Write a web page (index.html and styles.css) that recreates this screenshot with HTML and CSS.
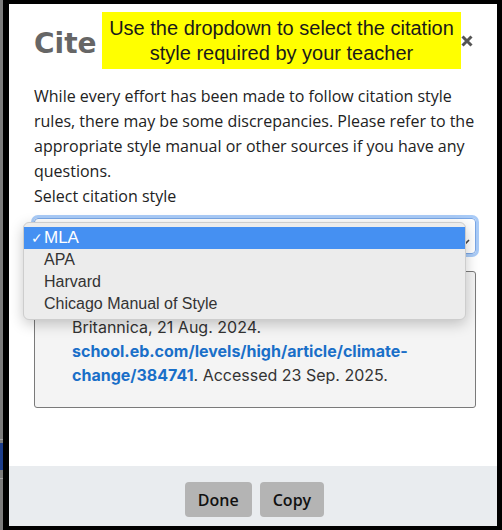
FILE: index.html
```html
<!DOCTYPE html>
<html lang="en">
<head>
<meta charset="utf-8">
<title>Cite</title>
<link rel="stylesheet" href="styles.css">
</head>
<body>
<div class="page">
  <div class="backdrop">
    <div class="backdrop-line"></div>
    <div class="backdrop-blue"></div>
    <div class="backdrop-line"></div>
  </div>
  <div class="frame">
    <div class="modal">
      <div class="modal-body">
        <div class="modal-header">
          <h2 class="title">Cite</h2>
          <svg class="close" width="12" height="12" viewBox="0 0 12 12" aria-label="Close">
            <path d="M1.5 1.5 L10.5 10.5 M10.5 1.5 L1.5 10.5" stroke="#555" stroke-width="3" stroke-linecap="butt"/>
          </svg>
        </div>
        <p class="intro">While every effort has been made to follow citation style rules, there may be some discrepancies. Please refer to the appropriate style manual or other sources if you have any questions.</p>
        <div class="label">Select citation style</div>
        <div class="select">
          <span class="select-value">MLA</span>
          <svg class="chevron" width="9" height="6" viewBox="0 0 9 6"><path d="M1 1 L4.5 4.5 L8 1" fill="none" stroke="#444" stroke-width="1.6"/></svg>
        </div>
        <div class="citation">
          <p class="citation-text">“Climate change.” <i>Britannica School</i>, Encyclopædia Britannica, 21 Aug. 2024. <a class="link" href="#">school.eb.com/levels/high/article/climate-change/384741</a>. Accessed 23 Sep. 2025.</p>
        </div>
      </div>
      <div class="modal-footer">
        <button class="btn">Done</button>
        <button class="btn">Copy</button>
      </div>
      <div class="tip">Use the dropdown to select the citation style required by your teacher</div>
      <ul class="menu">
        <li class="menu-item selected"><span class="check">✓</span>MLA</li>
        <li class="menu-item">APA</li>
        <li class="menu-item">Harvard</li>
        <li class="menu-item">Chicago Manual of Style</li>
      </ul>
    </div>
  </div>
</div>
</body>
</html>
```
FILE: styles.css
```css
* { box-sizing: border-box; }
html, body {
  margin: 0;
  padding: 0;
  background: #000;
}
.page {
  display: flex;
  width: 502px;
  height: 530px;
  overflow: hidden;
}
.backdrop {
  width: 3px;
  background: #7d7d7d;
  display: flex;
  flex-direction: column;
  padding-top: 439px;
}
.backdrop-line {
  height: 1px;
  background: #a5a5a5;
}
.backdrop-blue {
  height: 27px;
  margin: 3px 0 8px;
  background: #1d3e8c;
}
.frame {
  flex: 1;
  padding: 4px 5px 4px 6px;
}
.modal {
  position: relative;
  height: 100%;
  background: #fff;
  display: flex;
  flex-direction: column;
}
.modal-body {
  flex: 1;
  padding: 23px 21px 0 25px;
}
.modal-header {
  display: flex;
  justify-content: space-between;
  align-items: center;
}
.title {
  margin: 0;
  font-family: "DejaVu Sans", sans-serif;
  font-weight: bold;
  font-size: 28px;
  line-height: 33px;
  color: #666;
}
.close {
  margin-right: 3px;
  margin-top: -6px;
}
.intro {
  margin: 24px 0 0;
  font-family: "Open Sans", sans-serif;
  font-size: 16px;
  line-height: 25px;
  color: #222;
}
.label {
  font-family: "Open Sans", sans-serif;
  font-size: 16px;
  line-height: 25px;
  color: #222;
}
.select {
  margin-top: 9px;
  height: 36px;
  border: 1px solid #7aa7e6;
  border-radius: 4px;
  box-shadow: 0 0 0 3px #a9cbf7;
  display: flex;
  align-items: center;
  justify-content: space-between;
  padding: 0 5px 0 12px;
  font-family: "Liberation Sans", sans-serif;
  font-size: 16px;
  color: #222;
}
.chevron { margin-top: 12px; }
.citation {
  margin-top: 17px;
  height: 137px;
  border: 1px solid #7a7a7a;
  border-radius: 3px;
  background: #f4f4f4;
  padding: 19px 20px 0 37px;
}
.citation-text {
  margin: 0;
  text-indent: -22px;
  font-family: Inter, sans-serif;
  font-size: 16px;
  line-height: 24px;
  color: #333;
}
.link {
  color: #1a6fc8;
  font-weight: bold;
  text-decoration: none;
}
.modal-footer {
  height: 60px;
  background: #e9ecef;
  display: flex;
  justify-content: center;
  align-items: flex-start;
  gap: 8px;
  padding: 16px 0 0 3px;
}
.btn {
  height: 35px;
  padding: 0 13px;
  border: none;
  border-radius: 4px;
  background: #b4b4b4;
  font-family: "Open Sans", sans-serif;
  font-weight: 600;
  font-size: 16px;
  color: #111;
}
.tip {
  position: absolute;
  left: 93px;
  top: 8px;
  width: 359px;
  height: 57px;
  padding-top: 4px;
  background: #ffff00;
  font-family: "Liberation Sans", sans-serif;
  font-size: 20px;
  line-height: 25px;
  text-align: center;
  color: #1a1a1a;
}
.menu {
  position: absolute;
  left: 14px;
  top: 218px;
  width: 443px;
  margin: 0;
  padding: 4px 0;
  list-style: none;
  background: #ececec;
  border: 1px solid #cdcdcd;
  border-radius: 6px;
  box-shadow: 0 4px 14px rgba(0,0,0,0.22);
  font-family: "Liberation Sans", sans-serif;
  font-size: 16px;
  color: #333;
}
.menu-item {
  position: relative;
  height: 22px;
  line-height: 22px;
  padding-left: 20px;
}
.menu-item.selected {
  background: #4590f2;
  color: #fff;
  font-size: 17px;
}
.check {
  position: absolute;
  left: 7px;
  top: 0;
  font-size: 14px;
}
```
